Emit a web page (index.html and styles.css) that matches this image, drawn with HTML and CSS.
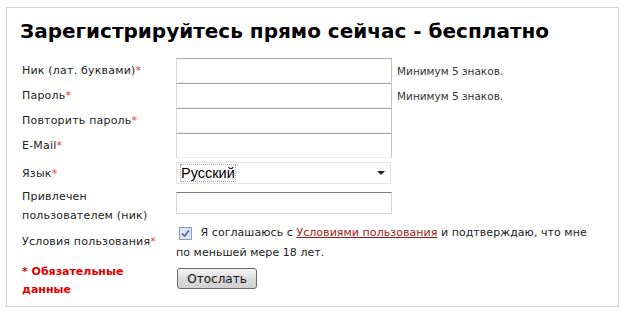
FILE: index.html
```html
<!DOCTYPE html>
<html lang="ru">
<head>
    <meta charset="UTF-8">
    <title>Регистрация</title>
    <link rel="stylesheet" href="styles.css">
</head>
<body>
    <div class="panel">
        <h1>Зарегистрируйтесь прямо сейчас - бесплатно</h1>

        <form class="signup">
            <div class="row">
                <label for="nick">Ник (лат. буквами)<span class="req">*</span></label>
                <div class="field">
                    <input type="text" id="nick">
                    <span class="hint">Минимум 5 знаков.</span>
                </div>
            </div>
            <div class="row">
                <label for="pass">Пароль<span class="req">*</span></label>
                <div class="field">
                    <input type="password" id="pass">
                    <span class="hint">Минимум 5 знаков.</span>
                </div>
            </div>
            <div class="row">
                <label for="pass2">Повторить пароль<span class="req">*</span></label>
                <div class="field">
                    <input type="password" id="pass2">
                </div>
            </div>
            <div class="row">
                <label for="email">E-Mail<span class="req">*</span></label>
                <div class="field">
                    <input type="text" id="email">
                </div>
            </div>

            <div class="row row-lang">
                <label>Язык<span class="req">*</span></label>
                <div class="field">
                    <div class="select">
                        <span class="select-value">Русский</span>
                        <span class="select-arrow"></span>
                    </div>
                </div>
            </div>

            <div class="row row-ref">
                <label for="ref">Привлечен<br>пользователем (ник)</label>
                <div class="field">
                    <input type="text" id="ref" class="ref-input">
                </div>
            </div>

            <div class="row row-terms">
                <label>Условия пользования<span class="req">*</span></label>
                <div class="terms">
                    <span class="check">
                        <svg width="9" height="9" viewBox="0 0 9 9"><path d="M1 4.5 L3.5 7 L8 1.5" fill="none" stroke="#4a5fa8" stroke-width="1.6"/></svg>
                    </span>
                    Я соглашаюсь с <a href="#">Условиями пользования</a> и подтверждаю, что мне по меньшей мере 18 лет.
                </div>
            </div>

            <div class="row row-submit">
                <div class="required-note">* Обязательные<br>данные</div>
                <div class="field">
                    <button type="button">Отослать</button>
                </div>
            </div>
        </form>
    </div>
</body>
</html>
```

FILE: styles.css
```css
body {
    margin: 0;
    background: #fff;
    color: #222;
    font-family: 'DejaVu Sans', Verdana, sans-serif;
}

.panel {
    margin: 7px 0 0 6px;
    width: 611px;
    height: 298px;
    border: 1px solid #d2d2d2;
}

h1 {
    margin: 0;
    padding: 11px 0 0 13px;
    font-size: 20px;
    line-height: 24px;
    color: #000;
}

.signup {
    margin-top: 15px;
    padding-left: 15px;
}

.row {
    display: grid;
    grid-template-columns: 154px 1fr;
    align-items: center;
    min-height: 25px;
}

.row label {
    font-size: 11px;
    line-height: 19px;
    letter-spacing: 0.2px;
}

.req {
    color: #e03c3c;
}

.field {
    display: flex;
    align-items: center;
}

input {
    width: 216px;
    height: 25px;
    box-sizing: border-box;
    margin: 0;
    padding: 2px 4px;
    border: 1px solid;
    border-color: #a8a8a8 #c4c4c4 #ececec #d8d8d8;
    font-family: inherit;
    font-size: 12px;
    outline: none;
}

.hint {
    margin-left: 5px;
    font-size: 10.5px;
    color: #333;
}

.row-lang {
    margin-top: 2px;
    min-height: 26px;
}

.select {
    width: 215px;
    height: 22px;
    box-sizing: border-box;
    border: 1px solid #e4e4e4;
    display: flex;
    align-items: center;
    justify-content: space-between;
    padding: 0 5px 0 4px;
}

.select-value {
    font-family: 'Liberation Sans', Arial, sans-serif;
    font-size: 14.5px;
    color: #000;
    outline: 1px dotted #aaa;
}

.select-arrow {
    border-left: 4px solid transparent;
    border-right: 4px solid transparent;
    border-top: 4px solid #222;
}

.row-ref {
    margin-top: -3px;
    align-items: start;
}

.row-ref label {
    margin: 4px 0 -4px;
}

.row-ref .field {
    padding-top: 9px;
}

.ref-input {
    height: 22px;
    border-color: #7c7c96 #d4d4d4 #d4d4d4 #d4d4d4;
}

.row-terms {
    min-height: 40px;
}

.terms {
    margin: 2px 0 -2px;
    font-size: 11px;
    line-height: 20px;
    letter-spacing: 0.05px;
    padding-right: 20px;
}

.check {
    display: inline-flex;
    align-items: center;
    justify-content: center;
    width: 11px;
    height: 11px;
    margin: 0 5px 0 3px;
    border: 1px solid #8f9bb8;
    background: #dde3f0;
    vertical-align: -2px;
}

.terms a {
    color: #a01818;
}

.row-submit {
    align-items: start;
    min-height: 38px;
}

.required-note {
    padding-top: 2px;
    color: #e00000;
    font-weight: bold;
    font-size: 11px;
    line-height: 18px;
}

button {
    width: 80px;
    height: 21px;
    margin: 7px 0 0 1px;
    padding: 0;
    border: 1px solid #6a6a6a;
    border-radius: 3px;
    background: linear-gradient(#f4f4f4, #dadada 55%, #cfcfcf);
    font-family: 'DejaVu Sans', Tahoma, sans-serif;
    font-size: 12px;
    color: #111;
}
```
